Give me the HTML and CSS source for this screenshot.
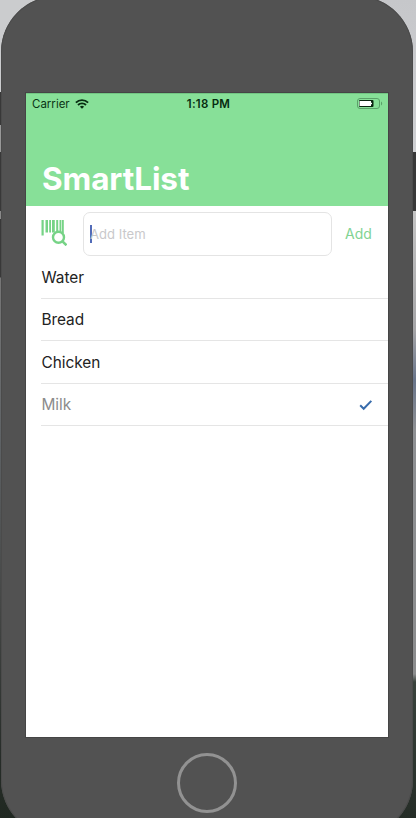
FILE: index.html
```html
<!DOCTYPE html>
<html lang="en">
<head>
<meta charset="utf-8">
<title>SmartList</title>
<link rel="stylesheet" href="styles.css">
</head>
<body>
<div class="phone">
  <main class="screen">
    <header class="header">
      <div class="status">
        <div class="carrier">
          <span>Carrier</span>
          <svg class="wifi" viewBox="0 0 14 10" width="14" height="10">
            <path d="M.9 3.6a8.7 8.7 0 0 1 12.2 0M3 6a5.7 5.7 0 0 1 8 0" fill="none" stroke="#082d12" stroke-width="1.9"/>
            <path d="M4.9 7.7a3 3 0 0 1 4.2 0L7 9.8z" fill="#082d12"/>
          </svg>
        </div>
        <span class="clock">1:18 PM</span>
        <svg class="battery" viewBox="0 0 26 11" width="26" height="11">
          <rect x=".5" y=".5" width="22" height="10" rx="2.5" fill="none" stroke="#5ba169"/>
          <path d="M24 3.500c1.600.5 1.600 3.500 0 4z" fill="#5ba169"/>
          <rect x="2" y="2" width="14.500" height="7" rx="1" fill="#0a2510"/>
          <path d="M2.500 3h11.500v1.800h1v1.400h-1V8H2.500z" fill="#fff"/>
        </svg>
      </div>
      <h1 class="title">SmartList</h1>
    </header>
    <section class="entry">
      <svg class="scan" viewBox="0 0 26 27" width="26" height="27">
        <g fill="#76d386">
          <path d="M.5 1h2.200v15.500H.5zM4.500 1h2.500v12.500H4.500zM8.200 1h1.800v12.500H8.200zM11 1h2.800v12.500H11zM15.200 1h2v11h-2zM18.500 1h1.700v11h-1.700zM20.800 1h2v13h-2z"/>
        </g>
        <circle cx="17.500" cy="18.300" r="5.500" fill="#fff" stroke="#76d386" stroke-width="2.400"/>
        <path d="M21.500 22.300l4 4" stroke="#76d386" stroke-width="2.600"/>
      </svg>
      <div class="field"><span class="caret"></span><span class="placeholder">Add Item</span></div>
      <span class="add">Add</span>
    </section>
    <ul class="list">
      <li class="item"><span class="name">Water</span></li>
      <li class="item"><span class="name">Bread</span></li>
      <li class="item"><span class="name">Chicken</span></li>
      <li class="item done"><span class="name">Milk</span>
        <svg class="check" viewBox="0 0 14 12" width="14" height="12"><path d="M1.200 6.300l3.500 3.500L12.300 1.900" fill="none" stroke="#386cac" stroke-width="2"/></svg>
      </li>
    </ul>
  </main>
  <div class="home"></div>
</div>
</body>
</html>
```
FILE: styles.css
```css
* { box-sizing: border-box; }
html, body { margin: 0; height: 818px; overflow: hidden; }
body {
  font-family: Inter, "Liberation Sans", sans-serif;
  background:
    linear-gradient(#cbccce 0 92px, #383838 92px 125px, #989898 125px 152px, #383838 152px 211px, #8a8a8a 211px 219px, #383838 219px 277px, #777 278px, #5e6265 440px, #454746 600px, #262c28 760px, #202821) left / 208px 818px no-repeat,
    linear-gradient(#c6c7ca, #cfd0d3 152px, #383838 152px 211px, #c4c4c4 211px, #a5a5a7 330px, #68748a 380px, #8e9093 430px, #8b8c8d 674px, #39423c 682px, #252d27) right / 208px 818px no-repeat;
}
.phone {
  width: 412px;
  height: 840px;
  margin: -4px 0 0 1px;
  padding: 97px 25px 0;
  border-radius: 56px;
  background: #525252;
  box-shadow: inset 0 0 0 1px #4b4b4b;
}
.screen {
  width: 362px;
  height: 644px;
  background: #fff;
  outline: 1px solid #454545;
}
.header {
  height: 113px;
  background: #87e098;
  border-top: 1px solid #72c683;
}
.status {
  height: 20px;
  display: grid;
  grid-template-columns: 1fr auto 1fr;
  align-items: center;
  padding: 0 5px 0 6px;
  font-size: 11.500px;
  line-height: 14px;
  color: #0b3516;
}
.carrier { display: flex; align-items: center; gap: 5px; }
.wifi { margin-top: -1px; }
.clock { font-weight: 600; letter-spacing: .25px; margin-left: 2px; color: #062c10; }
.battery { justify-self: end; margin-top: -1px; }
.title {
  margin: 45px 0 0 16px;
  font-size: 31.500px;
  line-height: 40px;
  font-weight: 700;
  letter-spacing: -.1px;
  color: #fff;
}
.entry {
  height: 50px;
  padding: 6px 16px 0 15px;
  display: flex;
  align-items: flex-start;
}
.scan { flex: none; margin-top: 7px; }
.field {
  flex: none;
  width: 249px;
  height: 44px;
  margin-left: 16px;
  padding-left: 6px;
  border: 1px solid #e4e4e4;
  border-radius: 7px;
  display: flex;
  align-items: center;
}
.caret { width: 2px; height: 18px; background: #526bb8; margin-right: -2px; }
.placeholder { font-size: 13.100px; color: #c9c9cb; }
.add { margin-left: 13px; font-size: 14px; line-height: 44px; color: #81d392; }
.list { list-style: none; margin: 0; padding: 0 0 0 15px; }
.item {
  height: 42.500px;
  border-bottom: 1px solid #e5e5e5;
  display: flex;
  align-items: center;
  justify-content: space-between;
  padding: 1px 15px 0 0;
  font-size: 15.400px;
  color: #222;
}
.name { margin-left: .4px; }
.done { color: #8c8c8c; }
.home {
  width: 60px;
  height: 60px;
  margin: 16px auto 0 151px;
  border: 3px solid #929292;
  border-radius: 50%;
}
```
